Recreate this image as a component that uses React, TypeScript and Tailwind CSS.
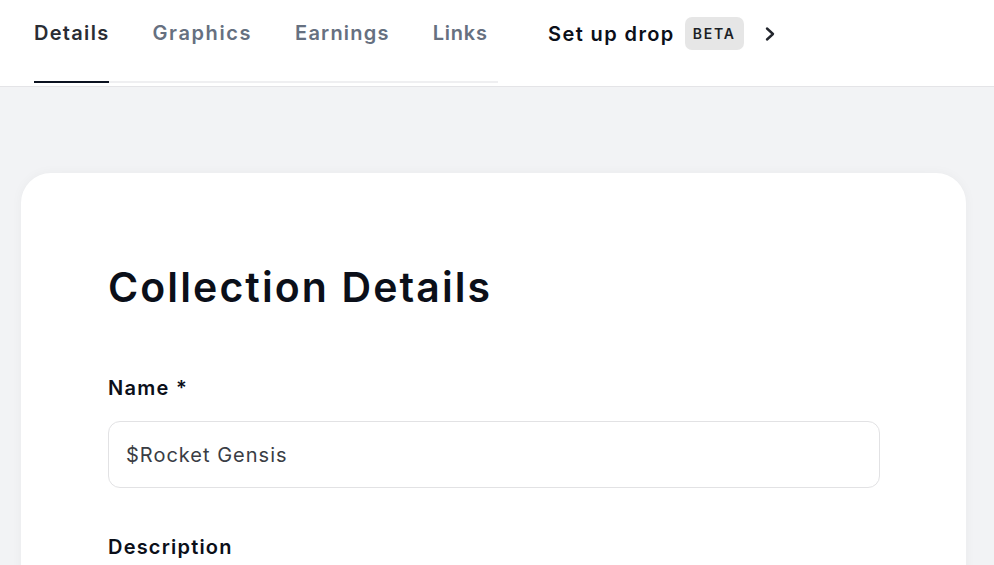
import React from "react";

const tabs = [
  { t: "Details", cls: "tracking-[1.3px] text-[#2a2d34] border-b-2 border-[#0b1220] -mb-[2px]" },
  { t: "Graphics", cls: "tracking-[1.6px] text-[#667080]" },
  { t: "Earnings", cls: "tracking-[1.2px] text-[#667080]" },
  { t: "Links", cls: "tracking-[0.8px] text-[#667080]" },
];

export default function App() {
  const font = { fontFamily: "Inter, 'Noto Sans', sans-serif" };
  return (
    <div className="w-[994px] h-[565px] overflow-hidden bg-[#f2f3f5]" style={font}>
      <header className="h-[87px] bg-white border-b border-[#e4e4e7] flex items-start pl-[34px]">
        <div className="flex items-start">
          <nav className="flex h-[83px] border-b-2 border-[#efeff1] w-[464px] gap-[43px]">
            {tabs.map(({ t, cls }) => (
              <div key={t} className={`h-[83px] pt-[18px] text-[20px] font-semibold ${cls}`}>
                {t}
              </div>
            ))}
          </nav>
          <div className="flex items-center pt-[17px] ml-[50px]">
            <span className="text-[20px] font-semibold text-[#0b0f19] tracking-[1.4px]">Set up drop</span>
            <span className="ml-[10px] h-[33px] px-[8px] rounded-[7px] bg-[#e6e6e6] flex items-center text-[14px] font-semibold tracking-[1.8px] text-[#1c1f26]">BETA</span>
            <svg className="ml-[19px]" width="14" height="16" viewBox="0 0 14 16" fill="none">
              <path d="M4 2.5 L10 8 L4 13.5" stroke="#23262d" strokeWidth="2.4" strokeLinecap="round" strokeLinejoin="round" />
            </svg>
          </div>
        </div>
      </header>
      <main className="pt-[86px] px-[21px] pr-[28px]">
        <section className="bg-white rounded-[30px] shadow-[0_0_12px_rgba(0,0,0,0.04)] pt-[84px] pl-[87px] pr-[86px] h-[500px]">
          <h1 className="text-[41px] font-semibold text-[#0b0f19] tracking-[2.1px] leading-[60px]">Collection Details</h1>
          <label className="block mt-[56px] text-[20px] font-semibold text-[#0b0f19] tracking-[1.3px] leading-[30px]">Name *</label>
          <div className="mt-[18px] h-[67px] rounded-[12px] border border-[#e2e2e4] flex items-center pl-[17px] text-[20px] text-[#3a3d44] tracking-[1px]">
            $Rocket Gensis
          </div>
          <label className="block mt-[44px] text-[20px] font-semibold text-[#0b0f19] tracking-[1.2px] leading-[30px]">Description</label>
        </section>
      </main>
    </div>
  );
}
